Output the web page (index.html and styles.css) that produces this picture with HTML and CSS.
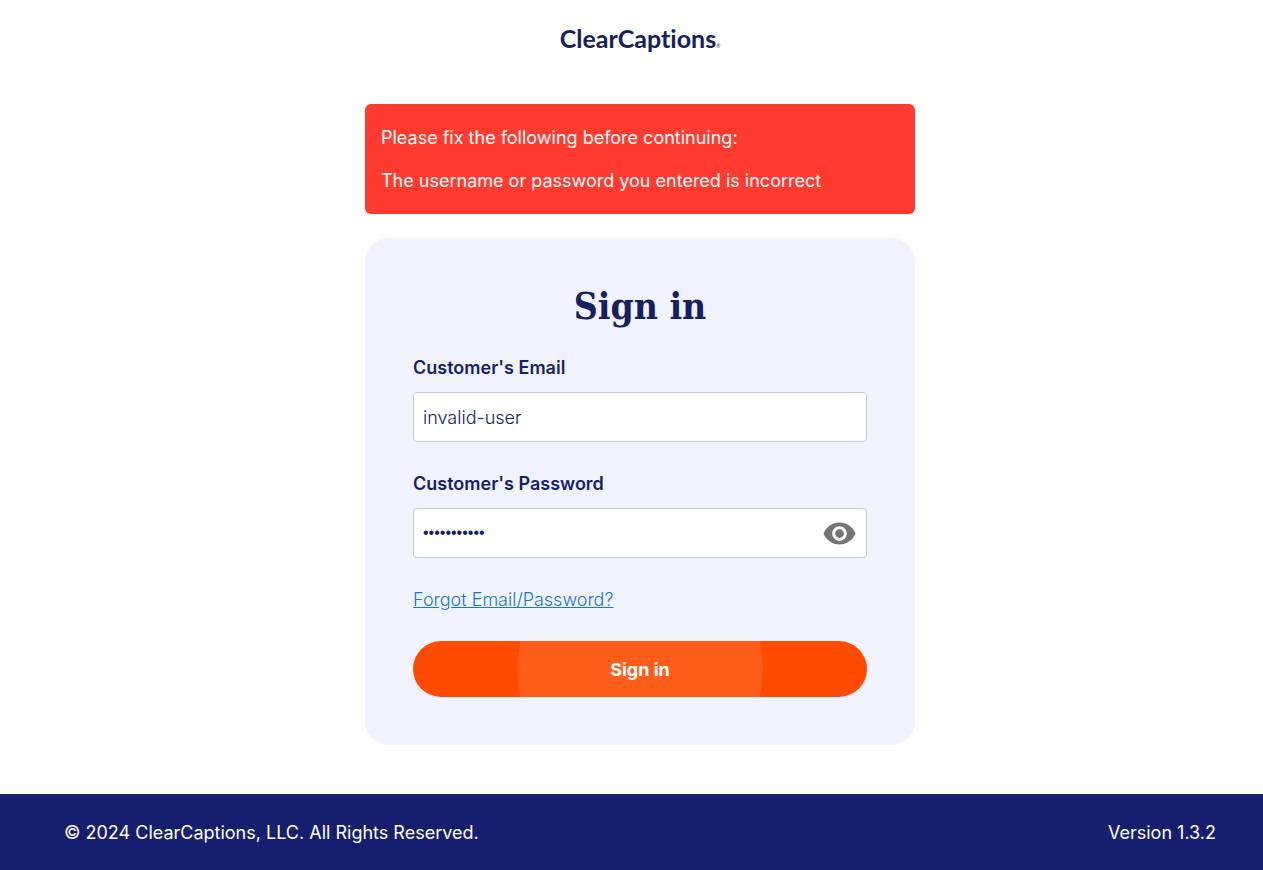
FILE: index.html
```html
<!DOCTYPE html>
<html lang="en">
<head>
<meta charset="utf-8">
<meta name="viewport" content="width=device-width, initial-scale=1">
<title>Sign in - ClearCaptions</title>
<link rel="stylesheet" href="styles.css">
</head>
<body>
<header class="header">
  <div class="logo">ClearCaptions<span class="logo-mark">®</span></div>
</header>
<main class="main">
  <div class="alert" role="alert">
    <p class="alert-line">Please fix the following before continuing:</p>
    <p class="alert-line">The username or password you entered is incorrect</p>
  </div>
  <form class="card">
    <h1 class="title">Sign in</h1>
    <div class="field">
      <label class="label" for="email">Customer's Email</label>
      <input class="input" id="email" type="text" value="invalid-user">
    </div>
    <div class="field">
      <label class="label" for="password">Customer's Password</label>
      <div class="password-box">
        <input class="input input-password" id="password" type="password" value="invalidpass">
        <button class="reveal" type="button" aria-label="Show password">
          <svg class="eye" viewBox="0 0 24 24" aria-hidden="true"><path d="M12 4.5C7 4.5 2.73 7.61 1 12c1.73 4.39 6 7.5 11 7.5s9.27-3.11 11-7.5c-1.73-4.39-6-7.5-11-7.5zM12 17c-2.76 0-5-2.24-5-5s2.240-5 5-5 5 2.240 5 5-2.240 5-5 5zm0-8c-1.660 0-3 1.340-3 3s1.340 3 3 3 3-1.340 3-3-1.340-3-3-3z"/></svg>
        </button>
      </div>
    </div>
    <a class="forgot" href="#">Forgot Email/Password?</a>
    <button class="submit" type="submit">Sign in</button>
  </form>
</main>
<footer class="footer">
  <span>© 2024 ClearCaptions, LLC. All Rights Reserved.</span>
  <span>Version 1.3.2</span>
</footer>
</body>
</html>
```
FILE: styles.css
```css
* { box-sizing: border-box; }

body {
  margin: 0;
  min-height: 100vh;
  display: flex;
  flex-direction: column;
  font: 400 18px/27px Inter, "Liberation Sans", sans-serif;
  color: #151f6d;
  background: #fff;
}

.header {
  display: flex;
  justify-content: center;
  padding: 24px 0 0 17px;
}

.logo {
  display: flex;
  align-items: baseline;
  font: 700 25px/28px Lato, sans-serif;
  font-variant-ligatures: none;
  color: #14205f;
}

.logo-mark { font-size: 5px; font-weight: 400; }

.main {
  flex: 1;
  display: flex;
  flex-direction: column;
  align-items: center;
  gap: 24px;
  padding: 44px 0 48px 17px;
}

.alert {
  display: flex;
  flex-direction: column;
  gap: 16px;
  width: 100%;
  max-width: 550px;
  padding: 20px 16px;
  border-radius: 6px;
  background: #ff3b30;
  color: #fff;
}

.alert-line { margin: 0; }

.card {
  display: flex;
  flex-direction: column;
  gap: 28px;
  width: 100%;
  max-width: 550px;
  padding: 48px;
  border-radius: 24px;
  background: #f0f3fb;
}

.title {
  margin: 0;
  font: 700 37px/40px "DejaVu Serif Condensed", "DejaVu Serif", serif;
  text-align: center;
  color: #14205f;
}

.field {
  display: flex;
  flex-direction: column;
  gap: 11px;
}

.label { font-weight: 600; }

.input {
  width: 100%;
  height: 50px;
  padding: 0 9px;
  border: 1px solid #c0c9e8;
  border-radius: 4px;
  background: #fff;
  font: 300 18px/27px Inter, "Liberation Sans", sans-serif;
  color: #14205f;
}

.password-box { position: relative; }

.input-password {
  padding-right: 56px;
  font: 400 16px/27px "Liberation Sans", sans-serif;
}

.reveal {
  position: absolute;
  top: 0;
  right: 10px;
  bottom: 0;
  display: flex;
  align-items: center;
  padding: 0;
  border: 0;
  background: none;
}

.eye { width: 35px; height: 35px; fill: #757575; }

.forgot {
  align-self: flex-start;
  font-weight: 300;
  color: #1976d2;
}

.submit {
  height: 56px;
  border: 0;
  border-radius: 28px;
  background: radial-gradient(circle at center, #ff5e1a 122px, #ff4b00 123px);
  font: 700 18px/27px Inter, "Liberation Sans", sans-serif;
  color: #fff;
}

.footer {
  display: flex;
  justify-content: space-between;
  align-items: center;
  min-height: 76px;
  padding: 24px 47px 24px 64px;
  background: #161f6d;
  color: #fff;
}
```
